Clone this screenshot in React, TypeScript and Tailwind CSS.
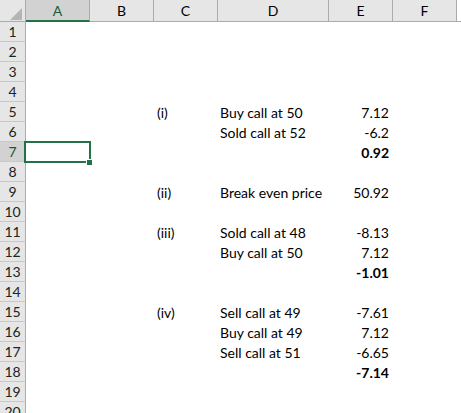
import React from "react";

type Cell = { t: string; b?: boolean };
const data: Record<number, { c?: string; d?: string; e?: Cell }> = {
  5: { c: "(i)", d: "Buy call at 50", e: { t: "7.12" } },
  6: { d: "Sold call at 52", e: { t: "-6.2" } },
  7: { e: { t: "0.92", b: true } },
  9: { c: "(ii)", d: "Break even price", e: { t: "50.92" } },
  11: { c: "(iii)", d: "Sold call at 48", e: { t: "-8.13" } },
  12: { d: "Buy call at 50", e: { t: "7.12" } },
  13: { e: { t: "-1.01", b: true } },
  15: { c: "(iv)", d: "Sell call at 49", e: { t: "-7.61" } },
  16: { d: "Buy call at 49", e: { t: "7.12" } },
  17: { d: "Sell call at 51", e: { t: "-6.65" } },
  18: { e: { t: "-7.14", b: true } },
};

export default function App() {
  const rows = Array.from({ length: 20 }, (_, i) => i + 1);
  return (
    <div
      className="w-[461px] h-[413px] overflow-hidden bg-white text-black"
      style={{ fontFamily: "Lato, 'Open Sans', sans-serif" }}
    >
      {/* header */}
      <div className="flex h-[22px] bg-[#e6e6e6] text-[14px] leading-none">
        <div className="relative w-[26px] shrink-0 h-full border-r border-b border-[#ababab]">
          <div
            className="absolute left-[10px] top-[8px] w-[12px] h-[12px] bg-[#b4b4b4]"
            style={{ clipPath: "polygon(100% 0, 100% 100%, 0 100%)" }}
          />
        </div>
        <div className="w-[64px] shrink-0 h-full flex items-center justify-center bg-[#d2d2d2] border-r border-[#ababab] border-b-2 border-b-[#217346] text-[#185c37] pt-[1px]">A</div>
        <div className="w-[64px] shrink-0 h-full flex items-center justify-center border-r border-b border-[#ababab]">B</div>
        <div className="w-[64px] shrink-0 h-full flex items-center justify-center border-r border-b border-[#ababab]">C</div>
        <div className="w-[111px] shrink-0 h-full flex items-center justify-center border-r border-b border-[#ababab]">D</div>
        <div className="w-[64px] shrink-0 h-full flex items-center justify-center border-r border-b border-[#ababab]">E</div>
        <div className="w-[64px] shrink-0 h-full flex items-center justify-center border-r border-b border-[#ababab]">F</div>
        <div className="flex-1 h-full border-b border-[#ababab] bg-white" />
      </div>
      {rows.map((r) => {
        const d = data[r] || {};
        const sel = r === 7;
        return (
          <div key={r} className="flex h-[20px] text-[14px] leading-none">
            <div
              className={
                "w-[26px] shrink-0 h-full flex items-center justify-center border-r border-b border-[#c8c8c8] border-r-[#ababab] " +
                (sel ? "bg-[#d2d2d2] text-[#185c37]" : "bg-[#e6e6e6] text-[#222]")
              }
            >
              {r}
            </div>
            <div className="relative w-[64px] shrink-0 h-full">
              {sel && (
                <>
                  <div className="absolute left-[-2px] top-[-1px] w-[67px] h-[22px] border-2 border-[#217346]" />
                  <div className="absolute left-[60px] top-[17px] w-[7px] h-[7px] bg-[#217346] border border-white" />
                </>
              )}
            </div>
            <div className="w-[64px] shrink-0 h-full" />
            <div className="w-[64px] shrink-0 h-full flex items-center pl-[3px] pt-[1px]">{d.c}</div>
            <div className="w-[111px] shrink-0 h-full flex items-center pl-[2px] pt-[1px] whitespace-nowrap">{d.d}</div>
            <div className={"w-[64px] shrink-0 h-full flex items-center justify-end pr-[4px] pt-[1px] " + (d.e?.b ? "font-bold" : "")}>
              {d.e?.t}
            </div>
            <div className="flex-1 h-full" />
          </div>
        );
      })}
    </div>
  );
}
